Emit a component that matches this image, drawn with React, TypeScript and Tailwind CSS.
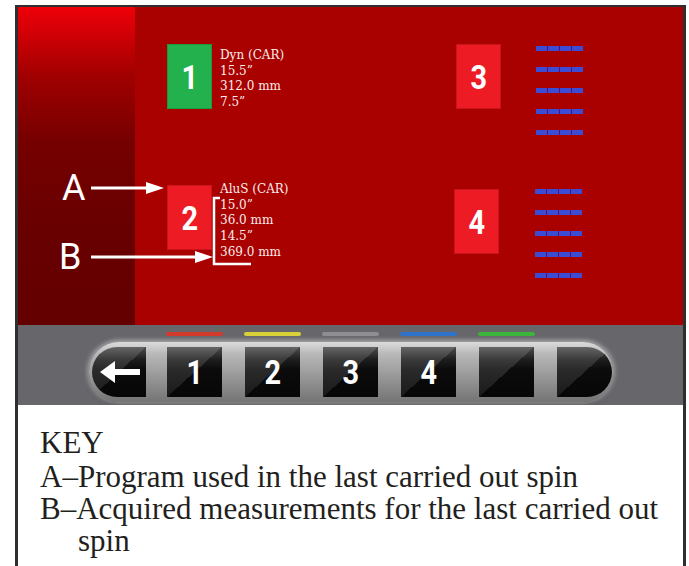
import React from "react";

function NumBox({ n, cls }: { n: string; cls: string }) {
  return (
    <div className={`w-[45px] h-[65px] flex items-center justify-center shrink-0 border ${cls}`}>
      <span className="inline-block scale-x-85 font-['Roboto',sans-serif] font-bold text-[34px] leading-none text-white">
        {n}
      </span>
    </div>
  );
}

function Dashes() {
  return (
    <div className="flex flex-col gap-[16px]">
      {[0, 1, 2, 3, 4].map((r) => (
        <div key={r} className="flex gap-px bg-[#5a1060]">
          {[0, 1, 2, 3].map((s) => (
            <div key={s} className="w-[11px] h-[5px] bg-[#3b4bd3]" />
          ))}
        </div>
      ))}
    </div>
  );
}

function Btn({ children, cls = "" }: { children?: React.ReactNode; cls?: string }) {
  return (
    <div
      className={`h-[50px] flex items-center justify-center shrink-0 bg-[linear-gradient(to_bottom,rgba(255,255,255,0.28)_0%,rgba(255,255,255,0.08)_25%,rgba(0,0,0,0)_45%,rgba(0,0,0,0.4)_100%),linear-gradient(to_bottom_right,#2a2a2a_50%,#0b0b0b_50%)] ${cls}`}
    >
      {children}
    </div>
  );
}

function BtnNum({ n }: { n: string }) {
  return (
    <span className="inline-block scale-x-85 font-['Roboto',sans-serif] font-bold text-[34px] leading-none text-white">
      {n}
    </span>
  );
}

export default function App() {
  return (
    <div className="w-[689px] h-[566px] bg-white overflow-hidden">
      <div className="ml-[15px] mt-[5px] w-[671px] h-[561px] border-x-[3px] border-t-2 border-[#2f2f2f] flex flex-col">
        {/* red screen */}
        <div className="relative h-[318px] flex shrink-0">
          <div className="w-[117px] bg-[linear-gradient(to_bottom,#ee0008_0%,#a00000_22%,#760000_42%,#680000_70%,#640000_100%)]" />
          <div className="flex-1 bg-[#a90000] pl-[32px] pt-[37px] font-['DejaVu_Serif',serif] text-[12px] text-[#f8eded]">
            <div className="flex h-[141px]">
              <div className="w-[289px] flex">
                <NumBox n="1" cls="bg-[#22b14c] border-[#1d9a40]" />
                <div className="ml-[8px] mt-[4px] leading-[15.5px]">
                  <div>Dyn (CAR)</div>
                  <div>15.5”</div>
                  <div>312.0 mm</div>
                  <div>7.5”</div>
                </div>
              </div>
              <NumBox n="3" cls="bg-[#ed1c24] border-[#c9141b]" />
              <div className="ml-[35px] mt-[2px]">
                <Dashes />
              </div>
            </div>
            <div className="flex">
              <div className="w-[287px] flex">
                <NumBox n="2" cls="bg-[#ed1c24] border-[#c9141b]" />
                <div className="ml-[8px] -mt-[3px] leading-[15.7px]">
                  <div>AluS (CAR)</div>
                  <div>15.0”</div>
                  <div>36.0 mm</div>
                  <div>14.5”</div>
                  <div>369.0 mm</div>
                </div>
              </div>
              <div className="mt-[4px]">
                <NumBox n="4" cls="bg-[#ed1c24] border-[#c9141b]" />
              </div>
              <div className="ml-[36px] mt-[4px]">
                <Dashes />
              </div>
            </div>
          </div>

          {/* annotations */}
          <div className="absolute left-[44px] top-[163px] font-['Roboto',sans-serif] text-[36px] leading-none text-white">
            A
          </div>
          <div className="absolute left-[41px] top-[232px] font-['Roboto',sans-serif] text-[36px] leading-none text-white">
            B
          </div>
          <svg className="absolute left-0 top-0 pointer-events-none" width="665" height="318">
            <line x1="73" y1="181" x2="129" y2="181" stroke="white" strokeWidth="3" />
            <polygon points="128,175 146,181 128,187" fill="white" />
            <line x1="73" y1="250" x2="178" y2="250" stroke="white" strokeWidth="3" />
            <polygon points="177,244 195,250 177,256" fill="white" />
            <polyline points="202,191 196,191 196,257 233,257" fill="none" stroke="white" strokeWidth="2.5" />
          </svg>
        </div>

        {/* gray control bar */}
        <div className="h-[80px] shrink-0 bg-[#67666b] pt-[7px]">
          <div className="flex gap-[21px] ml-[148px]">
            <div className="w-[57px] h-[4px] rounded-full bg-[#d23a2c]" />
            <div className="w-[57px] h-[4px] rounded-full bg-[#d8d238]" />
            <div className="w-[57px] h-[4px] rounded-full bg-[#8e8e90]" />
            <div className="w-[57px] h-[4px] rounded-full bg-[#2f72c9]" />
            <div className="w-[57px] h-[4px] rounded-full bg-[#3bb53a]" />
          </div>
          <div className="ml-[71px] mt-[6px] w-[524px] h-[60px] rounded-full flex items-center pl-[3px] pr-[1px] bg-[linear-gradient(to_bottom,#dcdcdc_0%,#b8b8b8_20%,#9a9a9a_55%,#747474_100%)] shadow-[0_0_4px_2px_rgba(255,255,255,0.45),0_3px_5px_rgba(0,0,0,0.45)]">
            <Btn cls="w-[54px] rounded-l-[25px]">
              <svg width="54" height="50" viewBox="0 0 54 50">
                <polygon points="8,25 23,14 23,22 48,22 48,28 23,28 23,36" fill="white" />
              </svg>
            </Btn>
            <Btn cls="w-[55px] ml-[21px]">
              <BtnNum n="1" />
            </Btn>
            <Btn cls="w-[55px] ml-[23px]">
              <BtnNum n="2" />
            </Btn>
            <Btn cls="w-[55px] ml-[23px]">
              <BtnNum n="3" />
            </Btn>
            <Btn cls="w-[55px] ml-[23px]">
              <BtnNum n="4" />
            </Btn>
            <Btn cls="w-[55px] ml-[23px]" />
            <Btn cls="w-[55px] ml-[23px] rounded-r-[25px]" />
          </div>
        </div>

        {/* key */}
        <div className="flex-1 bg-white pl-[22px] pt-[22px] font-['Liberation_Serif',serif] text-[31px] leading-[32px] text-[#231f20]">
          <div className="mb-[2px]">KEY</div>
          <div className="whitespace-nowrap">A–Program used in the last carried out spin</div>
          <div className="whitespace-nowrap">B–Acquired measurements for the last carried out</div>
          <div className="pl-[38px]">spin</div>
        </div>
      </div>
    </div>
  );
}
